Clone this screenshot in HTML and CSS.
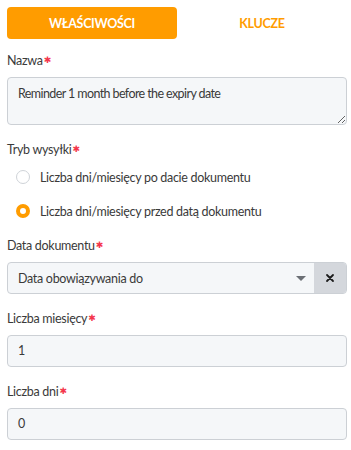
FILE: index.html
```html
<!DOCTYPE html>
<html lang="pl">
  <head>
    <meta charset="UTF-8" />
    <title>Przypomnienie</title>
    <link rel="stylesheet" href="styles.css">
  </head>
  <body>
    <div class="panel">
      <div class="tabs">
        <button class="tab tab-active">Właściwości</button>
        <button class="tab">Klucze</button>
      </div>

      <div class="field">
        <label class="field-label">Nazwa<span class="req">✱</span></label>
        <textarea class="input textarea">Reminder 1 month before the expiry date</textarea>
      </div>

      <div class="field field-radio">
        <label class="field-label">Tryb wysyłki<span class="req">✱</span></label>
        <label class="radio-row">
          <span class="radio"></span>
          Liczba dni/miesięcy po dacie dokumentu
        </label>
        <label class="radio-row">
          <span class="radio radio-checked"></span>
          Liczba dni/miesięcy przed datą dokumentu
        </label>
      </div>

      <div class="field field-select">
        <label class="field-label">Data dokumentu<span class="req">✱</span></label>
        <div class="select">
          <div class="select-value">Data obowiązywania do</div>
          <span class="caret"></span>
          <div class="select-clear">
            <svg width="10" height="10" viewBox="0 0 10 10">
              <path d="M2 2 L8 8 M8 2 L2 8" stroke="#1c1c1c" stroke-width="1.8" stroke-linecap="round" />
            </svg>
          </div>
        </div>
      </div>

      <div class="field">
        <label class="field-label">Liczba miesięcy<span class="req">✱</span></label>
        <div class="input">1</div>
      </div>

      <div class="field">
        <label class="field-label">Liczba dni<span class="req">✱</span></label>
        <div class="input">0</div>
      </div>
    </div>
  </body>
</html>
```

FILE: styles.css
```css
* {
  box-sizing: border-box;
}

body {
  margin: 0;
  padding: 7px 4px 0 7px;
  background-color: #fff;
  font-family: Lato, 'Liberation Sans', sans-serif;
  font-size: 12.5px;
  letter-spacing: -0.3px;
  color: #3a3a3a;
}

.panel {
  width: 340px;
}

/* tabs */
.tabs {
  display: flex;
}

.tab {
  flex: 1;
  height: 32px;
  border: none;
  border-radius: 4px;
  background: none;
  font-family: inherit;
  font-size: 12.5px;
  font-weight: bold;
  letter-spacing: -0.3px;
  text-transform: uppercase;
  color: #ff9c00;
}

.tab-active {
  background-color: #ff9c00;
  color: #fff;
}

/* fields */
.field {
  margin-top: 13px;
}

.field + .field {
  margin-top: 16px;
}

.field-label {
  display: block;
  height: 18px;
  line-height: 18px;
  margin-bottom: 7px;
}

.req {
  color: #f4364c;
  margin-left: 1px;
  font-family: 'DejaVu Sans', sans-serif;
  font-size: 9px;
  line-height: 1;
  vertical-align: 2px;
}

.input {
  width: 340px;
  height: 32px;
  padding: 6px 10px;
  border: 1px solid #ccd0d5;
  border-radius: 4px;
  background-color: #f5f7f9;
  line-height: 18px;
  font-family: inherit;
  font-size: 12.5px;
  letter-spacing: -0.3px;
  color: #3a3a3a;
}

.textarea {
  display: block;
  height: 48px;
  padding: 7px 10px;
  letter-spacing: -0.6px;
  resize: vertical;
}

/* radio */
.field-radio .field-label {
  margin-bottom: 1px;
}

.radio-row {
  display: flex;
  align-items: center;
  height: 34px;
  padding-left: 9px;
}

.radio {
  width: 14px;
  height: 14px;
  margin-right: 10px;
  border: 1px solid #cfd3d8;
  border-radius: 50%;
  background-color: #fff;
}

.radio-checked {
  border: 4.5px solid #ff9c00;
}

.field.field-select {
  margin-top: 9px;
}

/* select */
.select {
  display: flex;
  align-items: center;
  height: 32px;
  border: 1px solid #ccd0d5;
  border-radius: 4px;
  background-color: #f5f7f9;
  overflow: hidden;
}

.select-value {
  flex: 1;
  padding-left: 10px;
}

.caret {
  width: 0;
  height: 0;
  margin-right: 8px;
  border-left: 5px solid transparent;
  border-right: 5px solid transparent;
  border-top: 5px solid #6b6f75;
}

.select-clear {
  display: flex;
  align-items: center;
  justify-content: center;
  width: 32px;
  height: 100%;
  background-color: #d4d7dc;
}
```
